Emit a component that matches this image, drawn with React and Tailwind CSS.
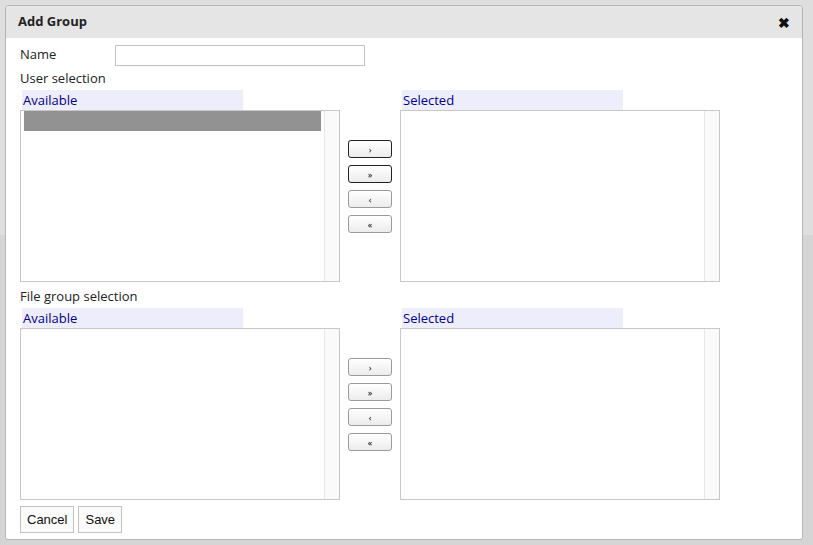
import React from "react";

const Arrows = ({ active, top }) => (
  <div className="flex flex-col gap-[7px] w-[44px] ml-2" style={{ marginTop: top }}>
    {["›", "»", "‹", "«"].map((g, i) => (
      <button
        key={g}
        className={`h-[18px] rounded-[3px] border bg-gradient-to-b from-white to-[#ececec] text-[9px] leading-none text-black ${
          active && i < 2 ? "border-[#222]" : "border-[#9a9a9a]"
        }`}
      >
        {g}
      </button>
    ))}
  </div>
);

const ListBox = ({ title, selectedRow }) => (
  <div className="flex flex-col w-[320px]">
    <div className="ml-[2px] w-[221px] h-[20px] bg-[#ededfc] text-[#000088] text-[13px] leading-[20px] px-[1px]">{title}</div>
    <div className="flex h-[172px] border border-[#c8c8c8] bg-white">
      <div className="flex-1 px-[3px]">
        {selectedRow && <div className="h-[20px] bg-[#929292]" />}
      </div>
      <div className="w-[15px] border-l border-[#e8e8e8] bg-[#fafafa]" />
    </div>
  </div>
);

const Section = ({ label, active }) => (
  <div className="flex flex-col">
    <div className="text-[13px] h-[18px] leading-[18px] text-[#222] mb-[3px]">{label}</div>
    <div className="flex items-start">
      <ListBox title="Available" selectedRow={active} />
      <Arrows active={active} top="50px" />
      <div className="ml-2">
        <ListBox title="Selected" />
      </div>
    </div>
  </div>
);

export default function App() {
  return (
    <div className="relative w-[813px] h-[545px] bg-[#d5d5d5] overflow-hidden" style={{ fontFamily: '"Open Sans", "Noto Sans", sans-serif' }}>
      <div className="absolute left-0 top-0 w-[813px] h-[235px] bg-[#dedede]" />
      <div className="absolute left-[5px] top-[5px] w-[798px] h-[535px] bg-white border border-[#b5b5b5] rounded-[3px] overflow-hidden flex flex-col">
        <div className="h-[32px] bg-[#e5e5e5] flex items-center justify-between px-[12px]">
          <span className="text-[13px] font-bold text-[#222]">Add Group</span>
          <span className="text-[14px] font-bold text-[#111]">✖</span>
        </div>
        <div className="flex flex-col px-[14px] pt-[6px]">
          <div className="flex items-center h-[22px]">
            <span className="w-[95px] text-[13px] text-[#222]">Name</span>
            <input className="w-[250px] h-[21px] border border-[#c2c2c2] outline-none" />
          </div>
          <div className="mt-[3px]">
            <Section label="User selection" active />
          </div>
          <div className="mt-[5px]">
            <Section label="File group selection" />
          </div>
          <div className="flex gap-[4px] mt-[6px]">
            {["Cancel", "Save"].map((t) => (
              <button key={t} className="h-[27px] px-[6px] border border-[#c2c2c2] bg-[#fafafa] text-[13px] text-[#111]" style={{ fontFamily: '"Liberation Sans", "DejaVu Sans", sans-serif' }}>
                {t}
              </button>
            ))}
          </div>
        </div>
      </div>
    </div>
  );
}
